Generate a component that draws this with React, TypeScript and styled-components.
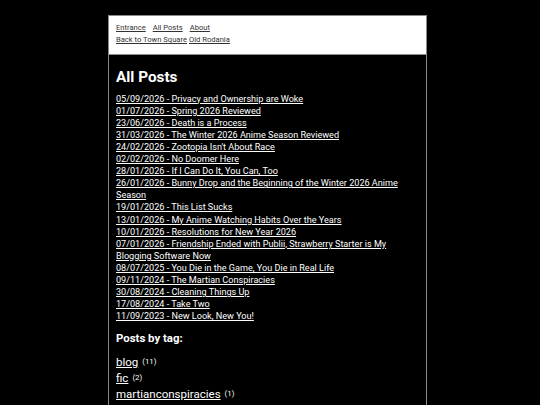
import React from 'react';
import styled, { createGlobalStyle } from 'styled-components';

const posts = [
  '05/09/2026 - Privacy and Ownership are Woke',
  '01/07/2026 - Spring 2026 Reviewed',
  '23/06/2026 - Death is a Process',
  '31/03/2026 - The Winter 2026 Anime Season Reviewed',
  "24/02/2026 - Zootopia Isn't About Race",
  '02/02/2026 - No Doomer Here',
  '28/01/2026 - If I Can Do It, You Can, Too',
  '26/01/2026 - Bunny Drop and the Beginning of the Winter 2026 Anime Season',
  '19/01/2026 - This List Sucks',
  '13/01/2026 - My Anime Watching Habits Over the Years',
  '10/01/2026 - Resolutions for New Year 2026',
  '07/01/2026 - Friendship Ended with Publii, Strawberry Starter is My Blogging Software Now',
  '08/07/2025 - You Die in the Game, You Die in Real Life',
  '09/11/2024 - The Martian Conspiracies',
  '30/08/2024 - Cleaning Things Up',
  '17/08/2024 - Take Two',
  '11/09/2023 - New Look, New You!',
];

const tags = [
  { name: 'blog', count: 11 },
  { name: 'fic', count: 2 },
  { name: 'martianconspiracies', count: 1 },
  { name: 'meta', count: 1 },
];

const GlobalStyle = createGlobalStyle`
  html, body {
    margin: 0;
    background: #000;
    font-family: Roboto, "Liberation Sans", sans-serif;
  }
`;

const App = () => {
  return (
    <>
      <GlobalStyle />
      <St.Page>
        <St.Container>
          <St.Header>
            <St.NavRow>
              <St.NavLink href="#">Entrance</St.NavLink>
              <St.NavLink href="#">All Posts</St.NavLink>
              <St.NavLink href="#">About</St.NavLink>
            </St.NavRow>
            <St.NavRow $tight>
              <St.NavLink href="#">Back to Town Square</St.NavLink>
              <St.NavLink href="#">Old Rodania</St.NavLink>
            </St.NavRow>
          </St.Header>
          <St.Main>
            <St.Title>All Posts</St.Title>
            <St.PostList>
              {posts.map((post) => (
                <li key={post}>
                  <St.PostLink href="#">{post}</St.PostLink>
                </li>
              ))}
            </St.PostList>
            <St.TagTitle>Posts by tag:</St.TagTitle>
            <St.TagList>
              {tags.map((tag) => (
                <li key={tag.name}>
                  <St.TagLink href="#">{tag.name}</St.TagLink>
                  <St.TagCount>({tag.count})</St.TagCount>
                </li>
              ))}
            </St.TagList>
          </St.Main>
        </St.Container>
      </St.Page>
    </>
  );
};

export default App;

const St = {
  Page: styled.div`
    padding-top: 15px;
    padding-right: 5px;
    display: flex;
    justify-content: center;
  `,

  Container: styled.div`
    width: 319px;
    border: 1px solid #8a8a8a;
    border-bottom: none;
    box-sizing: border-box;
  `,

  Header: styled.header`
    background: #fff;
    padding: 6px 7px 7px;
    border-bottom: 1px solid #8a8a8a;
  `,

  NavRow: styled.div<{ $tight?: boolean }>`
    display: flex;
    gap: ${({ $tight }) => ($tight ? '2px' : '7px')};
    font-size: 7.6px;
    line-height: 12.3px;
  `,

  NavLink: styled.a`
    color: #333;
    text-decoration: underline;
  `,

  Main: styled.main`
    padding: 12px 7px 0;
    color: #fff;
    min-height: 400px;
  `,

  Title: styled.h1`
    margin: 0 0 6px;
    font-size: 15.3px;
    font-weight: 700;
    line-height: 20px;
  `,

  PostList: styled.ul`
    list-style: none;
    margin: 0;
    padding: 0;
    font-size: 9.1px;
    line-height: 12.1px;
  `,

  PostLink: styled.a`
    color: #fff;
    text-decoration: underline;
  `,

  TagTitle: styled.h2`
    margin: 8px 0 8px;
    font-size: 11.4px;
    font-weight: 700;
    line-height: 16px;
  `,

  TagList: styled.ul`
    list-style: none;
    margin: 0;
    padding: 0;
    font-size: 11.5px;
    line-height: 16px;
  `,

  TagLink: styled.a`
    color: #fff;
    text-decoration: underline;
  `,

  TagCount: styled.span`
    margin-left: 4px;
    font-size: 7.8px;
    vertical-align: 2px;
  `,
};
